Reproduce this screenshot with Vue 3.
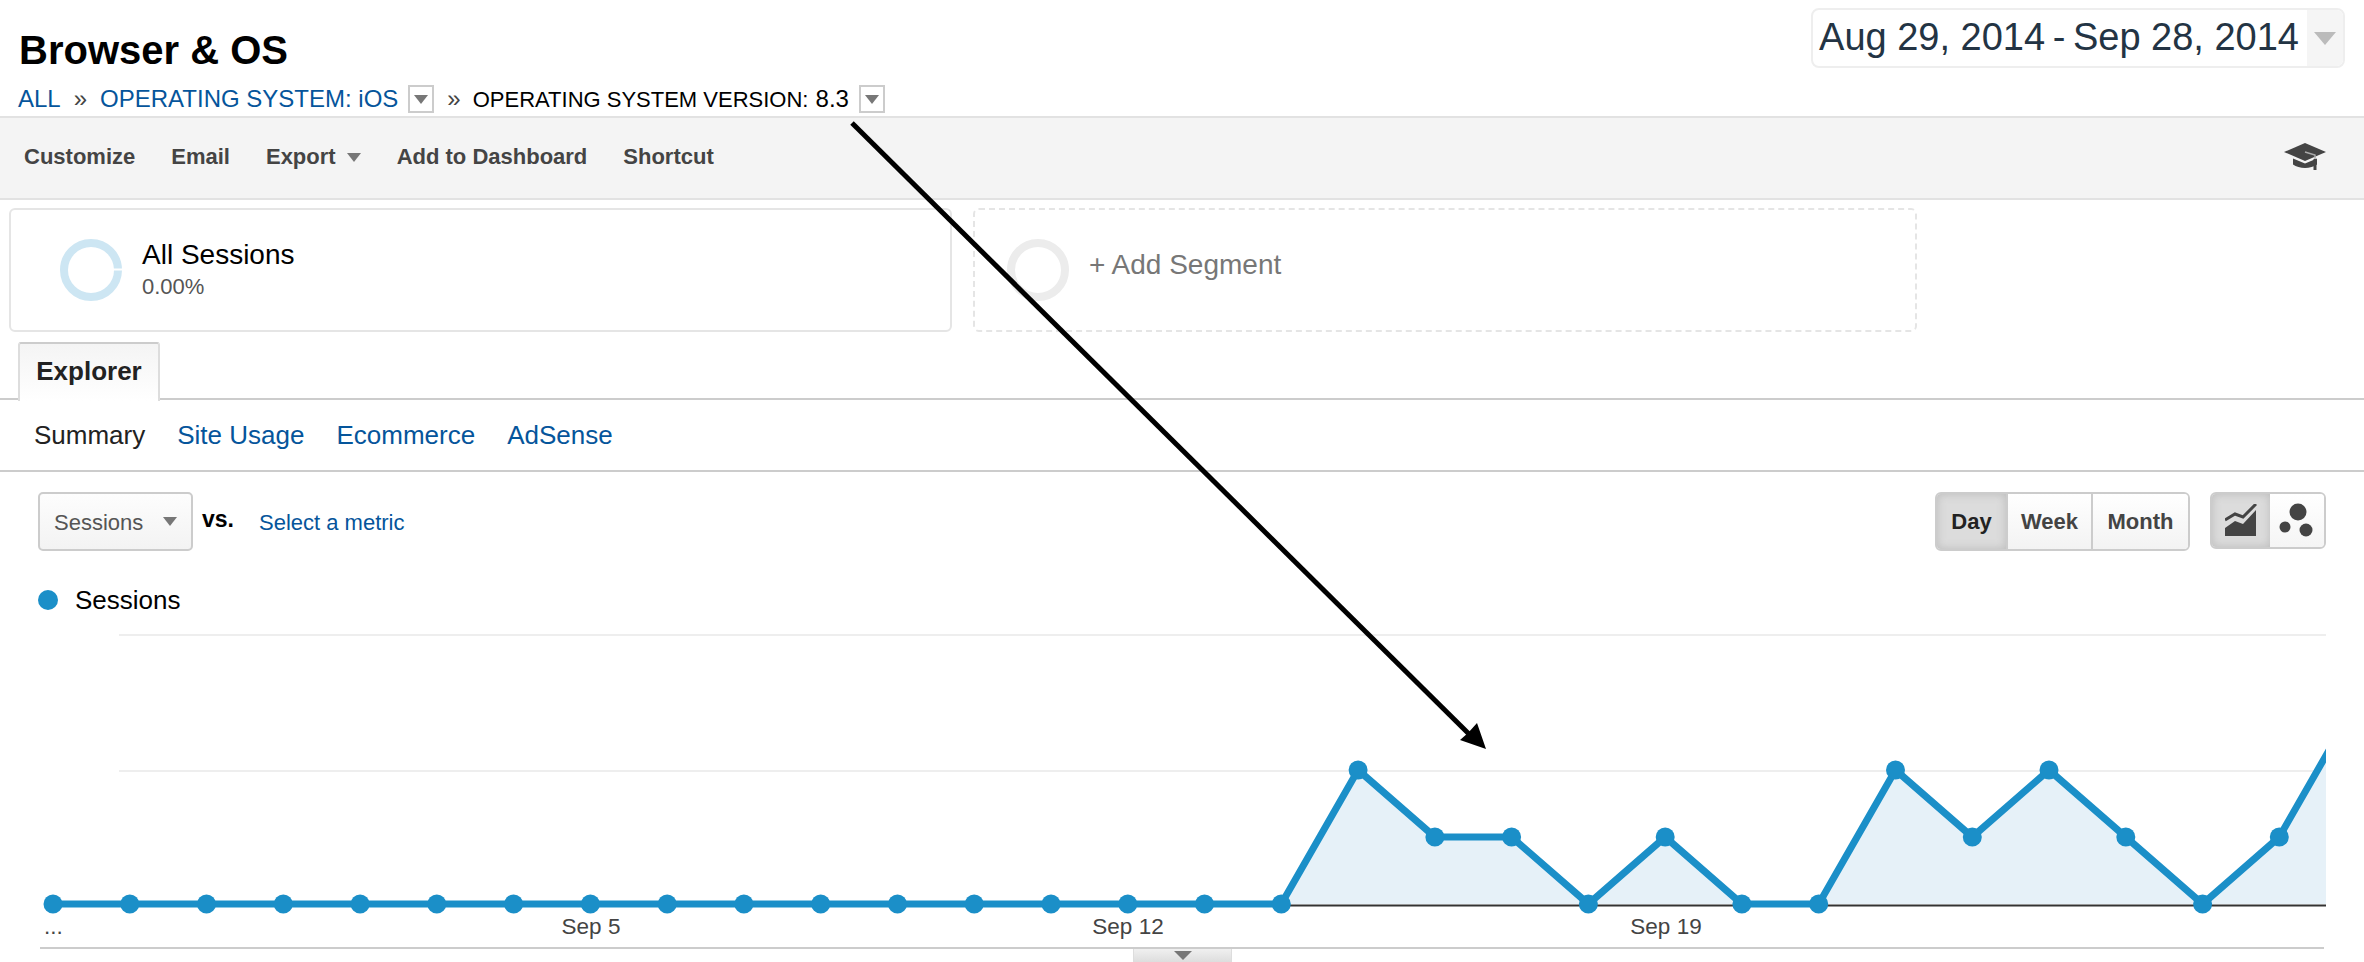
<script setup>
// sessions per day, one dot every day from Aug 29
const values = [0,0,0,0,0,0,0,0,0,0,0,0,0,0,0,0,0,2,1,1,0,1,0,0,2,1,2,1,0,1,3]
const stepX = 76.77
const baseY = 904
const unit = 67
const points = values.map((v, i) => ({
  x: +(53 + i * stepX).toFixed(1),
  y: +(baseY - v * unit).toFixed(1)
}))
const linePath = points.map(p => `${p.x},${p.y}`).join(' ')
const areaPath = `53,${baseY} ${linePath} ${points[points.length - 1].x},${baseY}`

const toolbar = ['Customize', 'Email']
const subTabs = ['Site Usage', 'Ecommerce', 'AdSense']
const labels = [
  { x: 591, text: 'Sep 5' },
  { x: 1128, text: 'Sep 12' },
  { x: 1666, text: 'Sep 19' }
]
</script>

<template>
  <div class="page">
    <header class="head">
      <div class="head-left">
        <h1 class="title">Browser &amp; OS</h1>
        <div class="crumbs">
          <a class="link">ALL</a>
          <span class="sep sep-a">»</span>
          <a class="link">OPERATING SYSTEM: iOS</a>
          <span class="drop"><i class="tri"></i></span>
          <span class="sep sep-b">»</span>
          <span class="current">OPERATING SYSTEM VERSION: <b class="ver">8.3</b></span>
          <span class="drop"><i class="tri"></i></span>
        </div>
      </div>
      <div class="dates">
        <span class="dates-text">Aug 29, 2014 <span class="dash">-</span> Sep 28, 2014</span>
        <span class="dates-arrow"><i class="tri-date"></i></span>
      </div>
    </header>

    <nav class="toolbar">
      <span v-for="t in toolbar" :key="t" class="tool">{{ t }}</span>
      <span class="tool">Export<i class="tri tool-tri"></i></span>
      <span class="tool">Add to Dashboard</span>
      <span class="tool">Shortcut</span>
      <svg class="cap" width="42" height="27" viewBox="0 0 42 27">
        <path d="M0 9 21 0 42 9 21 18Z" fill="#444" />
        <path d="M9 15.5 21 20.5 33 15.5V21.5C27 26 15 26 9 21.5Z" fill="#444" />
        <path d="M21 9 31 12V18" fill="none" stroke="#aaa" stroke-width="1.5" />
        <path d="M31 16V27" stroke="#444" stroke-width="3" />
      </svg>
    </nav>

    <section class="segments">
      <div class="seg seg-on">
        <svg class="ring" width="64" height="64" viewBox="0 0 64 64">
          <circle cx="32" cy="32" r="27" fill="none" stroke="#cde6f3" stroke-width="8" />
          <rect x="54" y="30.5" width="10" height="2" fill="#fff" />
        </svg>
        <div>
          <div class="seg-name">All Sessions</div>
          <div class="seg-pct">0.00%</div>
        </div>
      </div>
      <div class="seg seg-add">
        <svg class="ring" width="64" height="64" viewBox="0 0 64 64">
          <circle cx="32" cy="32" r="27" fill="none" stroke="#ececec" stroke-width="8" />
        </svg>
        <span class="seg-plus">+ Add Segment</span>
      </div>
    </section>

    <div class="tabs">
      <span class="tab">Explorer</span>
    </div>
    <div class="subtabs">
      <span class="subtab-on">Summary</span>
      <a v-for="s in subTabs" :key="s" class="link subtab">{{ s }}</a>
    </div>

    <div class="controls">
      <div class="metric">
        <span>Sessions</span>
        <i class="tri metric-tri"></i>
      </div>
      <span class="vs">vs.</span>
      <a class="link pick">Select a metric</a>
      <div class="btns">
        <span class="btn btn-on btn-day">Day</span>
        <span class="btn btn-week">Week</span>
        <span class="btn btn-month">Month</span>
      </div>
      <div class="views">
        <span class="view view-on">
          <svg width="32" height="33" viewBox="0 0 32 33">
            <path d="M0 24 10 17 18 20 31 6V32H0Z" fill="#444" />
            <path d="M0 16 10 10 18 13 31 0" fill="none" stroke="#444" stroke-width="3" />
          </svg>
        </span>
        <span class="view">
          <svg width="36" height="36" viewBox="0 0 36 36">
            <circle cx="19" cy="9" r="8.5" fill="#444" />
            <circle cx="6" cy="24" r="5.5" fill="#444" />
            <circle cx="27" cy="27" r="6.5" fill="#444" />
          </svg>
        </span>
      </div>
    </div>

    <div class="legend"><i class="dot"></i>Sessions</div>

    <svg class="chart" width="2364" height="322" viewBox="0 625 2364 322">
      <defs>
        <clipPath id="plot"><rect x="0" y="625" width="2326" height="322" /></clipPath>
      </defs>
      <line x1="119" y1="635" x2="2326" y2="635" stroke="#eee" stroke-width="2" />
      <line x1="119" y1="771" x2="2326" y2="771" stroke="#eee" stroke-width="2" />
      <g clip-path="url(#plot)">
        <polygon :points="areaPath" fill="#e6f1f8" />
        <line x1="1282" y1="905.5" x2="2326" y2="905.5" stroke="#333" stroke-width="2" />
        <polyline :points="linePath" fill="none" stroke="#1b8fc8" stroke-width="7" stroke-linejoin="round" />
        <circle v-for="p in points" :key="p.x" :cx="p.x" :cy="p.y" r="9.5" fill="#1b8fc8" />
      </g>
      <text x="44" y="934" class="tick">...</text>
      <text v-for="l in labels" :key="l.text" :x="l.x" y="934" text-anchor="middle" class="tick">{{ l.text }}</text>
    </svg>

    <div class="foot">
      <div class="handle"><i class="tri handle-tri"></i></div>
    </div>

    <!-- annotation arrow drawn over the screenshot -->
    <svg class="note" width="2364" height="962" viewBox="0 0 2364 962">
      <line x1="852" y1="123" x2="1470" y2="735" stroke="#000" stroke-width="5" />
      <polygon points="1477,723 1486,749 1460,740 1468,733" fill="#000" />
    </svg>
  </div>
</template>

<style scoped>
.page {
  position: relative;
  width: 2364px;
  height: 962px;
  overflow: hidden;
  background: #fff;
  font-family: "Liberation Sans", Arial, sans-serif;
  color: #000;
}
.link { color: #05559b; }
.tri {
  display: inline-block;
  width: 0;
  height: 0;
  border-left: 7px solid transparent;
  border-right: 7px solid transparent;
  border-top: 9px solid #777;
}

.head {
  display: flex;
  justify-content: space-between;
  height: 116px;
  padding: 0 19px 0 18px;
}
.head-left { padding-top: 29px; }
.title {
  margin: 0;
  font-size: 40px;
  line-height: 42px;
  font-weight: 700;
  margin-left: 1px;
}
.crumbs {
  display: flex;
  align-items: center;
  margin-top: 13px;
  height: 30px;
  font-size: 24px;
}
.sep { color: #444; }
.sep-a { margin: 0 13px 0 13px; }
.sep-b { margin: 0 12px 0 13px; }
.current { font-size: 22px; }
.ver { font-size: 24px; font-weight: 400; margin-left: 1px; }
.drop {
  display: flex;
  align-items: center;
  justify-content: center;
  width: 26px;
  height: 28px;
  margin-left: 10px;
  border: 2px solid #ccc;
  box-sizing: border-box;
}
.dates {
  display: flex;
  align-self: flex-start;
  margin-top: 8px;
  height: 60px;
  box-sizing: border-box;
  border: 2px solid #eee;
  border-radius: 8px;
  overflow: hidden;
}
.dates-text {
  padding: 0 8px 0 6px;
  font-size: 38px;
  line-height: 54px;
  color: #233444;
  white-space: nowrap;
}
.dash { margin: 0 -3px; }
.dates-arrow {
  display: flex;
  align-items: center;
  justify-content: center;
  width: 36px;
  background: #f5f5f5;
}
.tri-date {
  width: 0;
  height: 0;
  border-left: 11px solid transparent;
  border-right: 11px solid transparent;
  border-top: 13px solid #bbb;
}

.toolbar {
  display: flex;
  align-items: center;
  gap: 36px;
  height: 84px;
  box-sizing: border-box;
  padding: 0 38px 2px 24px;
  background: #f4f4f4;
  border-top: 2px solid #e2e2e2;
  border-bottom: 2px solid #e2e2e2;
  font-size: 22px;
  font-weight: 700;
  color: #444;
}
.tool-tri { margin-left: 11px; vertical-align: 2px; }
.cap { margin-left: auto; margin-top: -2px; }

.segments {
  display: flex;
  gap: 21px;
  padding: 8px 0 0 9px;
}
.seg {
  display: flex;
  align-items: center;
  height: 124px;
  box-sizing: border-box;
  border-radius: 6px;
}
.seg-on {
  width: 943px;
  padding-left: 48px;
  border: 2px solid #e5e5e5;
}
.seg-add {
  width: 944px;
  padding-left: 31px;
  border: 2px dashed #e5e5e5;
}
.ring { flex: none; }
.seg-on .ring { margin-right: 19px; }
.seg-add .ring { margin-right: 19px; }
.seg-name { font-size: 28px; line-height: 32px; margin-top: -1px; }
.seg-pct { font-size: 22px; line-height: 26px; margin-top: 3px; color: #555; }
.seg-plus { font-size: 28px; color: #777; margin-top: -10px; }

.tabs {
  display: flex;
  height: 68px;
  box-sizing: border-box;
  padding: 10px 0 0 18px;
  border-bottom: 2px solid #ccc;
}
.tab {
  width: 142px;
  height: 59px;
  box-sizing: border-box;
  padding-top: 12px;
  text-align: center;
  border: 2px solid #ddd;
  border-top-color: #ccc;
  border-bottom: none;
  border-radius: 3px 3px 0 0;
  background: linear-gradient(#f4f4f4, #fff);
  font-size: 26px;
  font-weight: 700;
  color: #222;
}
.subtabs {
  display: flex;
  align-items: center;
  gap: 32px;
  height: 72px;
  box-sizing: border-box;
  padding-left: 34px;
  border-bottom: 2px solid #ccc;
  font-size: 26px;
}
.subtab-on { color: #222; }

.controls {
  display: flex;
  align-items: flex-start;
  padding: 20px 38px 0 38px;
  height: 59px;
  font-size: 22px;
}
.metric {
  display: flex;
  align-items: center;
  justify-content: space-between;
  width: 155px;
  height: 59px;
  box-sizing: border-box;
  padding: 2px 14px 0 14px;
  border: 2px solid #ccc;
  border-radius: 5px;
  background: linear-gradient(#fdfdfd, #f3f3f3);
  color: #555;
}
.metric-tri { margin-top: -3px; }
.vs {
  margin-left: 9px;
  font-size: 23px;
  line-height: 54px;
  font-weight: 700;
}
.pick {
  margin-left: 25px;
  line-height: 61px;
}
.btns {
  display: flex;
  margin-left: auto;
  height: 59px;
  box-sizing: border-box;
  border: 2px solid #ccc;
  border-radius: 6px;
  overflow: hidden;
  font-weight: 700;
  color: #444;
}
.btn {
  display: flex;
  align-items: center;
  justify-content: center;
  box-sizing: border-box;
  padding-top: 1px;
  background: linear-gradient(#fff, #f3f3f3);
}
.btn-day { width: 69px; }
.btn-week { width: 87px; border-left: 2px solid #ccc; border-right: 2px solid #ccc; }
.btn-month { width: 95px; }
.btn-on {
  background: #dcdcdc;
  box-shadow: inset 0 0 10px #bbb;
  color: #222;
}
.views {
  display: flex;
  margin-left: 20px;
  width: 116px;
  height: 57px;
  box-sizing: border-box;
  border: 2px solid #ccc;
  border-radius: 6px;
  overflow: hidden;
}
.view {
  display: flex;
  align-items: center;
  justify-content: center;
  flex: 1;
  background: linear-gradient(#fff, #f5f5f5);
}
.view-on {
  flex: none;
  width: 58px;
  background: #dcdcdc;
  box-shadow: inset 0 0 10px #bbb;
}

.legend {
  display: flex;
  align-items: center;
  height: 28px;
  margin-top: 35px;
  padding-left: 38px;
  font-size: 26px;
}
.dot {
  width: 20px;
  height: 20px;
  margin-right: 17px;
  border-radius: 50%;
  background: #1b8fc8;
}
.chart { display: block; margin-top: 11px; }
.tick { font-size: 22.5px; fill: #444; }

.foot {
  margin-left: 40px;
  width: 2284px;
  border-top: 2px solid #ccc;
}
.handle {
  display: flex;
  align-items: center;
  justify-content: center;
  width: 99px;
  height: 14px;
  margin-left: 1093px;
  box-sizing: border-box;
  border: 1px solid #ddd;
  border-top: none;
  background: linear-gradient(#f0f0f0, #ddd);
}
.handle-tri { border-left-width: 9px; border-right-width: 9px; }

.note {
  position: absolute;
  top: 0;
  left: 0;
  pointer-events: none;
}
</style>
